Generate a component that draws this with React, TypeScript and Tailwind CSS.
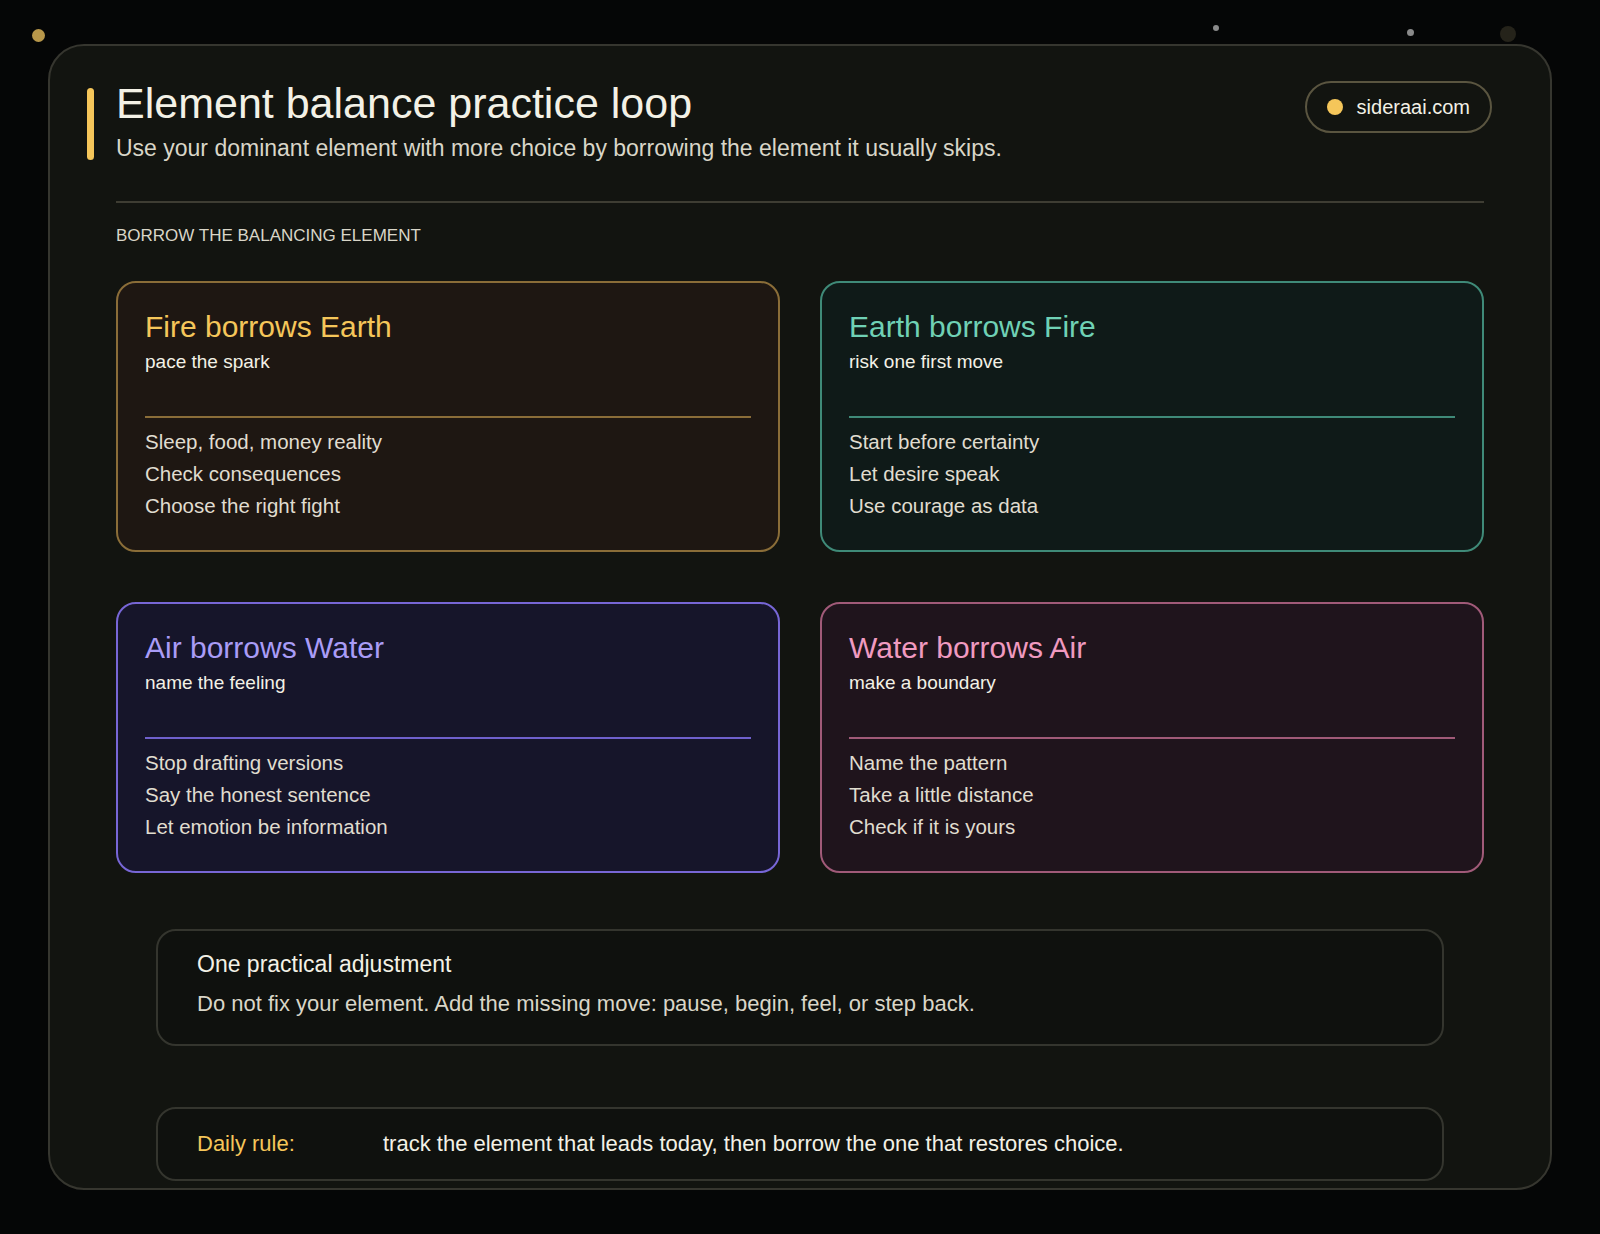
import React from "react";

const cards = [
  { t: "Fire borrows Earth", s: "pace the spark", items: ["Sleep, food, money reality", "Check consequences", "Choose the right fight"], box: "bg-[#1e1712] border-[#8a6d38]", title: "text-[#f5c65a]", line: "bg-[#8a6d38]" },
  { t: "Earth borrows Fire", s: "risk one first move", items: ["Start before certainty", "Let desire speak", "Use courage as data"], box: "bg-[#0f1a18] border-[#3f8a78]", title: "text-[#6fd1b5]", line: "bg-[#3f8a78]" },
  { t: "Air borrows Water", s: "name the feeling", items: ["Stop drafting versions", "Say the honest sentence", "Let emotion be information"], box: "bg-[#16152a] border-[#7766d6]", title: "text-[#a99cf7]", line: "bg-[#6f60cc]" },
  { t: "Water borrows Air", s: "make a boundary", items: ["Name the pattern", "Take a little distance", "Check if it is yours"], box: "bg-[#1f141c] border-[#a05a78]", title: "text-[#f09ac0]", line: "bg-[#a05a78]" },
];

export default function App() {
  return (
    <div className="relative w-[1600px] h-[1234px] bg-[#050606] overflow-hidden" style={{ fontFamily: '"Liberation Sans", Arial, sans-serif' }}>
      <div className="absolute left-[32px] top-[29px] w-[13px] h-[13px] rounded-full bg-[#b8974a]" />
      <div className="absolute left-[1213px] top-[25px] w-[6px] h-[6px] rounded-full bg-[#8a8a8a]" />
      <div className="absolute left-[1407px] top-[29px] w-[7px] h-[7px] rounded-full bg-[#8a8a8a]" />
      <div className="absolute left-[1500px] top-[26px] w-[16px] h-[16px] rounded-full bg-[#25231a]" />
      <div className="absolute left-[48px] top-[44px] w-[1504px] h-[1146px] rounded-[36px] border-2 border-[#36362f] bg-[#121410] overflow-hidden px-[66px] pt-[30px]">
        <div className="flex justify-between">
          <div className="flex">
            <div className="w-[7px] h-[72px] mt-[12px] rounded-full bg-[#f5c65a] mr-[22px] -ml-[29px]" />
            <div>
              <h1 className="text-[43px] leading-[54px] text-[#f3f1e6]">Element balance practice loop</h1>
              <p className="text-[23px] leading-[32px] mt-[2px] text-[#d9d6c8]">Use your dominant element with more choice by borrowing the element it usually skips.</p>
            </div>
          </div>
          <div className="h-[52px] mt-[5px] mr-[-8px] px-[20px] rounded-full border-2 border-[#5a5540] flex items-center gap-[14px] text-[20px] text-[#f3f1e6]">
            <span className="w-[16px] h-[16px] rounded-full bg-[#f5c65a]" />sideraai.com
          </div>
        </div>
        <div className="h-[2px] bg-[#3e3d33] mt-[37px]" />
        <div className="mt-[20px] text-[17px] text-[#d9d6c8]">BORROW THE BALANCING ELEMENT</div>
        <div className="grid grid-cols-2 gap-x-[40px] gap-y-[50px] mt-[32px]">
          {cards.map((c) => (
            <div key={c.t} className={`h-[271px] rounded-[20px] border-2 px-[27px] pt-[26px] ${c.box}`}>
              <div className={`text-[30px] leading-[36px] ${c.title}`}>{c.t}</div>
              <div className="text-[19px] leading-[24px] mt-[5px] text-[#f3f1e6]">{c.s}</div>
              <div className={`h-[2px] mt-[42px] ${c.line}`} />
              <div className="mt-[8px] text-[20.5px] leading-[32px] text-[#e0ddd0]">
                {c.items.map((i) => <div key={i}>{i}</div>)}
              </div>
            </div>
          ))}
        </div>
        <div className="mx-[40px] mt-[56px] h-[117px] rounded-[20px] border-2 border-[#34352e] bg-[#0f110e] px-[39px] pt-[18px]">
          <div className="text-[23px] leading-[30px] text-[#f3f1e6]">One practical adjustment</div>
          <div className="text-[22px] leading-[30px] mt-[10px] text-[#d9d6c8]">Do not fix your element. Add the missing move: pause, begin, feel, or step back.</div>
        </div>
        <div className="mx-[40px] mt-[61px] h-[74px] rounded-[20px] border-2 border-[#34352e] bg-[#0f110e] px-[39px] flex items-center text-[22px]">
          <span className="w-[186px] text-[#f5c65a]">Daily rule:</span>
          <span className="text-[#f3f1e6]">track the element that leads today, then borrow the one that restores choice.</span>
        </div>
      </div>
    </div>
  );
}
